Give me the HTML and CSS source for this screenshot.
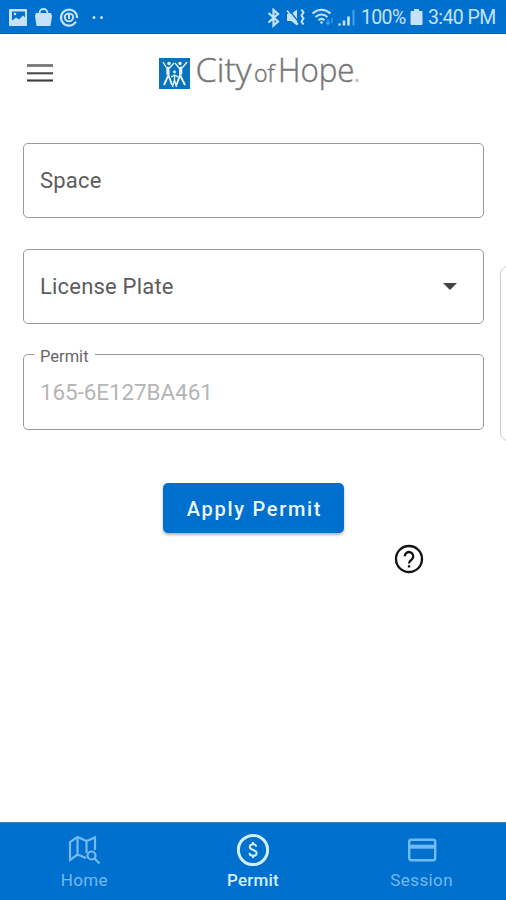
FILE: index.html
```html
<!DOCTYPE html>
<html lang="en">
<head>
<meta charset="utf-8">
<meta name="viewport" content="width=device-width">
<title>Permit</title>
<link rel="stylesheet" href="styles.css">
</head>
<body>
<div class="screen">
  <header class="status">
    <svg class="status-left" width="110" height="34" viewBox="0 0 110 34" fill="#c5e2fa">
      <path fill-rule="evenodd" d="M10 9h16a1 1 0 0 1 1 1v15a1 1 0 0 1-1 1H10a1 1 0 0 1-1-1V10a1 1 0 0 1 1-1zm2 2.500v9l4-3 3 2 4-4 2 2v-6z"/>
      <circle cx="15" cy="14" r="1.300"/>
      <path d="M36 13h15l1 3-1.500 10h-14L35 16z"/>
      <path d="M39.500 15v-2a4 4 0 0 1 8 0v2" fill="none" stroke="#c5e2fa" stroke-width="1.800"/>
      <path d="M76 21.500a8 8 0 1 1 1-3.500" fill="none" stroke="#c5e2fa" stroke-width="2.200"/>
      <path d="M65.300 15a4.200 4.200 0 1 0 7.300 0q-3.600-3-7.300 0M69 14v5" fill="none" stroke="#c5e2fa" stroke-width="2"/>
      <circle cx="94" cy="17.500" r="1.500"/><circle cx="101.500" cy="17.500" r="1.500"/>
    </svg>
    <div class="status-right">
      <svg width="94" height="34" viewBox="264 0 94 34" fill="none" stroke="#c5e2fa" stroke-width="2.200">
        <path d="M268.500 13l9.500 8.500-4.500 4V10l4.500 4-9.500 8.500"/>
        <path d="M287 14h4l6-4.500v16L291 21h-4z" fill="#c5e2fa" stroke="none"/>
        <path d="M288.500 9.500l11.500 14" stroke="#0070ce" stroke-width="1.300"/>
        <path d="M287 10.500l11 14" stroke-width="1.600"/>
        <path d="M301.500 9.500l2 3-2 3 2 3-2 3 2 3" stroke-width="2"/>
        <path d="M312.500 13.500q9-7.500 18 0M315.500 17q6-5 12 0M318.500 20.200q3-2.500 6 0" stroke-width="2.100"/>
        <circle cx="321.500" cy="22.500" r="1.300" fill="#c5e2fa" stroke="none"/>
        <path d="M328 19v5m-2-2l2 2.500 2-2.500M332 23v-5" stroke="#4fa3e5" stroke-width="1.100"/>
        <path d="M339.500 25.500v-2M344 25.500v-5M348.500 25.500v-9" stroke-width="2.600"/>
        <path d="M353.500 25.500V10" stroke="#4da0e2" stroke-width="2"/>
      </svg>
      <span class="battery-level">100%</span>
      <svg class="battery" width="13" height="18" viewBox="0 0 13 18" fill="#c5e2fa"><path d="M4 1h5v2h2.500q1 0 1 1v12q0 1-1 1h-10q-1 0-1-1V4q0-1 1-1H4z"/></svg>
      <span class="clock">3:40 PM</span>
    </div>
  </header>

  <div class="appbar">
    <svg class="menu" width="28" height="20" viewBox="0 0 28 20"><path d="M1 2.500h26" stroke="#777" stroke-width="2.800"/><path d="M1 10.300h26" stroke="#4a4a4a" stroke-width="2.100"/><path d="M1 17.500h26" stroke="#3b3b3b" stroke-width="2.100"/></svg>
    <div class="brand">
      <svg width="31" height="31" viewBox="0 0 31 31">
        <path d="M0 0h31v31H0z" fill="#0873bd"/>
        <g fill="none" stroke="#e9f6fd" stroke-linejoin="round">
          <path d="M4 4l3 5 3.500 1 4.500-5M16 5l4 5 4-1 4-5" stroke-width="1.300"/>
          <path d="M9 9l.5 8L5 27M9.500 17l3.500 10M21.500 9L21 17l-3.500 10M21 17l5 10" stroke-width="1.900"/>
          <path d="M8.800 9.500v7M21.800 9.500v7" stroke-width="3"/>
          <path d="M12 19l3.500-2 3.500 2M15.500 17v5l-2 7M15.500 22l2 7" stroke-width="1.300"/>
        </g>
        <g fill="#e9f6fd"><circle cx="10" cy="5.500" r="1.700"/><circle cx="21" cy="5.500" r="1.700"/><circle cx="15.500" cy="14" r="1.400"/></g>
      </svg>
      <svg class="wordmark" width="168" height="40" viewBox="0 0 168 40">
        <text x="3.500" y="29" font-size="32.500" textLength="56" lengthAdjust="spacingAndGlyphs">City</text>
        <text x="62" y="29" font-size="23.500" textLength="20.500" lengthAdjust="spacingAndGlyphs">of</text>
        <text x="86" y="29" font-size="32.500" textLength="76.500" lengthAdjust="spacingAndGlyphs">Hope</text>
        <circle cx="165" cy="27.500" r="1.500" fill="#ccc" stroke="#aaa"/>
      </svg>
    </div>
  </div>

  <main class="form">
    <div class="field"><span class="label">Space</span></div>
    <div class="field"><span class="label">License Plate</span><svg class="arrow" width="14" height="7" viewBox="0 0 14 7"><path d="M0 0h14L7 7z" fill="#444"/></svg></div>
    <div class="field filled"><span class="float">Permit</span><span class="value">165-6E127BA461</span></div>
    <button class="apply">Apply Permit</button>
    <svg class="help" width="30" height="30" viewBox="0 0 30 30" fill="none" stroke="#111" stroke-width="2.300"><circle cx="15" cy="15" r="13"/><path d="M10.800 12.300a4.200 4.200 0 1 1 7.200 2.900c-1.500 1.500-3 2.100-3 4.300"/><path d="M15 21.200v2.300"/></svg>
  </main>
  <div class="edge-handle"></div>

  <nav class="tabs">
    <div class="tab">
      <svg width="34" height="34" viewBox="0 0 34 34" fill="none" stroke="#73b9f2" stroke-width="2.200"><path d="M19 25l-8.500-3.500L3 27V9l7.500-5 9 4L28 4.500V17M10.500 4v17.500M19.500 8v12"/><circle cx="24.500" cy="22.500" r="4"/><path d="M27.500 25.500l5 5"/></svg>
      <span>Home</span>
    </div>
    <div class="tab active">
      <svg width="34" height="34" viewBox="0 0 34 34"><circle cx="17" cy="17" r="14.600" fill="none" stroke="#d2efff" stroke-width="3"/><path d="M20.400 13.600c-.3-1.500-1.500-2.300-3.300-2.300-2 0-3.300 1-3.300 2.700 0 3.900 6.800 2 6.800 6 0 1.800-1.500 2.800-3.500 2.800-2.100 0-3.500-1.100-3.600-2.900M17 9v2.500m0 11V25" fill="none" stroke="#d2efff" stroke-width="2"/></svg>
      <span>Permit</span>
    </div>
    <div class="tab">
      <svg width="34" height="34" viewBox="0 0 34 34"><rect x="4.200" y="6.700" width="26" height="20.500" rx="2" fill="none" stroke="#73b9f2" stroke-width="2.400"/><path d="M4 13.700h26" stroke="#73b9f2" stroke-width="4"/></svg>
      <span>Session</span>
    </div>
  </nav>
</div>
</body>
</html>
```
FILE: styles.css
```css
* { box-sizing: border-box; }
body { margin: 0; background: #fff; font-family: Roboto, "Liberation Sans", sans-serif; }
.screen { position: relative; width: 506px; height: 900px; display: flex; flex-direction: column; overflow: hidden; }

.status { height: 34px; flex: none; display: flex; justify-content: space-between; background: #0070ce; border-bottom: 1px solid #0862b5; color: #c5e2fa; }
.status svg { flex: none; }
.status-right { display: flex; align-items: center; padding-right: 10px; font-size: 19.500px; line-height: 34px; white-space: nowrap; }
.status-right span { padding-top: 3px; }
.battery-level { width: 44px; margin-left: 3px; letter-spacing: -0.65px; }
.status .battery { margin: 0 5px 0 5px; }
.clock { width: 68px; letter-spacing: -0.6px; }

.appbar { height: 78px; flex: none; display: flex; align-items: center; padding-left: 26px; }
.menu { flex: none; }
.brand { display: flex; align-items: center; margin-left: 105px; }
.wordmark { margin-left: 2px; overflow: visible; font-family: "Open Sans", "Noto Sans", sans-serif; font-weight: 300; fill: #777; stroke: #777; stroke-width: 0.45px; }

.form { flex: 1; display: flex; flex-direction: column; padding: 31px 22px 0 23px; }
.field { position: relative; flex: none; display: flex; align-items: center; justify-content: space-between; height: 75px; margin-bottom: 31px; padding: 0 26px 1px 16px; border: 1.500px solid #999; border-radius: 5px; }
.field + .field { margin-bottom: 30px; }
.field.filled { height: 76px; margin-bottom: 53px; padding-bottom: 0; }
.label { color: #5c5c5c; font-size: 22px; letter-spacing: 0.2px; }
.value { color: #b5b5b5; font-size: 22.500px; letter-spacing: -0.1px; }
.arrow { margin-top: 1px; }
.float { position: absolute; left: 10px; top: -9px; padding: 0 6px; background: #fff; color: #666; font-size: 16.500px; line-height: 22px; }
.apply { align-self: center; flex: none; width: 181px; height: 50px; padding: 1px 0 0 2px; border: 0; border-radius: 5px; background: #0070ce; color: #ecf8ff; font: 500 20px/50px Roboto, sans-serif; letter-spacing: 1.700px; box-shadow: 0 2px 3px rgba(0, 0, 0, 0.3); }
.help { align-self: flex-end; margin: 11px 60px 0 0; }
.edge-handle { position: absolute; top: 266px; left: 500px; width: 16px; height: 175px; border: 1.500px solid #ccc; border-radius: 8px; }

.tabs { flex: none; height: 78px; display: grid; grid-template-columns: repeat(3, 1fr); background: #0070ce; border-top: 1px solid #3b83c1; }
.tab { display: flex; flex-direction: column; align-items: center; padding-top: 10px; color: #73b9f2; font-size: 17px; line-height: 20px; letter-spacing: 0.4px; }
.tab span { margin-top: 3px; }
.active { color: #d2efff; font-weight: 500; letter-spacing: 0.2px; }
```
